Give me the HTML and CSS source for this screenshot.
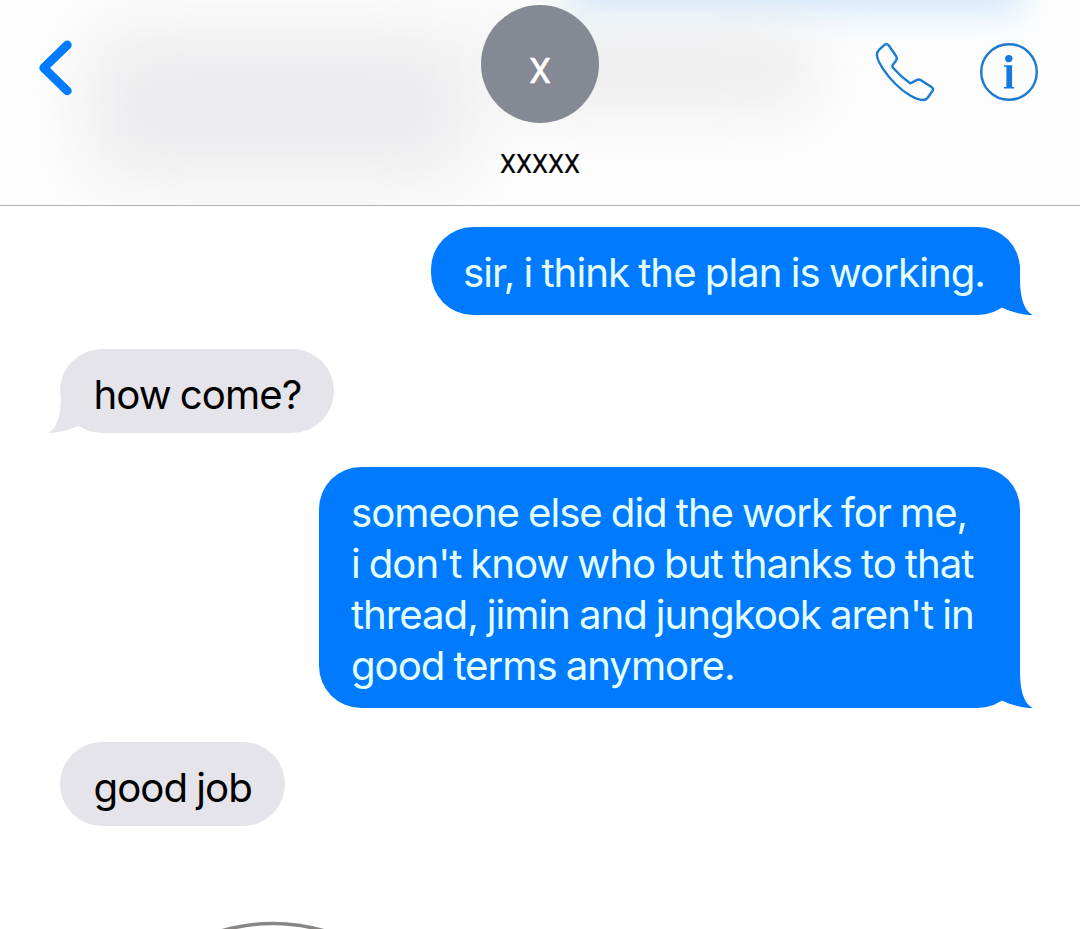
FILE: index.html
```
<!DOCTYPE html>
<html lang="en">
<head>
  <title>Messages</title>
  <meta charset="UTF-8">
  <meta name="viewport" content="width=device-width,initial-scale=1">
  <link rel="stylesheet" href="styles.css">
</head>

<body>
  <header class="topbar">
    <a href="#" class="back" aria-label="Back">
      <svg width="34" height="56" viewBox="0 0 34 56"><path d="M29.300 5 L5.700 27.800 L29.300 50.800"/></svg>
    </a>

    <div class="contact">
      <div class="avatar">X</div>
      <div class="name">XXXXX</div>
    </div>

    <div class="actions">
      <svg class="phone" width="60" height="60" viewBox="0 0 60 60">
        <path d="M9.500 2.800 Q12 1 14 3.800 L21 14 Q22.500 16.500 21 18.500 L17.600 23.300 Q17 24.500 17.800 25.500 Q25.500 34.500 34.500 40.800 Q35.500 41.500 36.500 40.900 L42 37.900 Q44 36.900 46 38.200 L56.500 45.100 Q59 46.800 57.300 49.300 L52.500 56 Q51 58 48 58 C41 58 30 51.500 20.500 42 C11 32.500 2.500 20 1.900 13 Q1.800 10 4 7.800 Z"/>
      </svg>
      <svg class="info" width="58" height="58" viewBox="0 0 58 58">
        <circle class="ring" cx="29" cy="29" r="27.800"/>
        <circle cx="28.800" cy="15.600" r="3.700"/>
        <path d="M24 22.200 H32.100 V44 H34.200 V45.400 H24 V44 H26.400 V23.800 H24 Z"/>
      </svg>
    </div>
  </header>

  <main class="chat">
    <div class="bubble me">sir, i think the plan is working.
      <svg class="tip" width="42" height="50" viewBox="0 0 42 50"><path d="M29 0 V12 C29 31 32 45 42 50 C32 50 20 47 11 42.500 L0 44 V0 Z"/></svg>
    </div>
    <div class="bubble them">how come?
      <svg class="tip" width="42" height="50" viewBox="0 0 42 50"><path d="M29 0 V12 C29 31 32 45 42 50 C32 50 20 47 11 42.500 L0 44 V0 Z"/></svg>
    </div>
    <div class="bubble me long">someone else did the work for me,<br>i don't know who but thanks to that<br>thread, jimin and jungkook aren't in<br>good terms anymore.
      <svg class="tip" width="42" height="50" viewBox="0 0 42 50"><path d="M29 0 V12 C29 31 32 45 42 50 C32 50 20 47 11 42.500 L0 44 V0 Z"/></svg>
    </div>
    <div class="bubble them">good job</div>
    <svg class="arc" width="110" height="16" viewBox="0 0 110 16"><path d="M3 18 Q55 3 107 18"/></svg>
  </main>
</body>
</html>
```
FILE: styles.css
```
*, *:before, *:after {
  box-sizing: border-box;
}

body {
  margin: 0;
  height: 929px;
  background: #fff;
  font-family: Inter, "Liberation Sans", sans-serif;
  overflow: hidden;
}

.topbar {
  position: relative;
  display: grid;
  grid-template-columns: 1fr 200px 1fr;
  height: 206px;
  border-bottom: 1px solid #b2b2b4;
  background: #fdfdfd;
  overflow: hidden;
}

.topbar:before, .topbar:after {
  content: "";
  position: absolute;
}
.topbar:before {
  left: 88px;
  top: 30px;
  width: 385px;
  height: 152px;
  border-radius: 40px;
  background: #ececee;
  filter: blur(32px);
}
.topbar:after {
  left: 570px;
  top: -50px;
  width: 450px;
  height: 60px;
  background: #cce4fb;
  filter: blur(18px);
}

.back {
  position: relative;
  z-index: 1;
  padding: 40px 0 0 38px;
}
.back path {
  fill: none;
  stroke: #007aff;
  stroke-width: 8.800;
  stroke-linecap: round;
  stroke-linejoin: round;
}

.contact {
  position: relative;
  z-index: 1;
  display: flex;
  flex-direction: column;
  align-items: center;
  padding-top: 5px;
  font-family: Roboto, "Liberation Sans", sans-serif;
}
/* second smudge, right of the avatar */
.contact:before {
  content: "";
  position: absolute;
  z-index: -1;
  left: 50px;
  top: 26px;
  width: 325px;
  height: 84px;
  border-radius: 38px;
  background: #ececed;
  filter: blur(30px);
}
.avatar {
  width: 118px;
  height: 118px;
  border-radius: 50%;
  background: #858994;
  color: #fff;
  font-size: 34.500px;
  line-height: 132px;
  text-align: center;
  -webkit-text-stroke: .5px #fff;
}
.name {
  margin-top: 25px;
  font-size: 25.500px;
  line-height: 32px;
  color: #000;
  -webkit-text-stroke: .2px #000;
}

.actions {
  position: relative;
  z-index: 1;
  display: flex;
  justify-content: flex-end;
  align-items: flex-start;
  gap: 45px;
  padding: 42px 42px 0 0;
}
.phone path, .info .ring {
  fill: none;
  stroke: #1c7bd0;
  stroke-width: 2.400;
  stroke-linejoin: round;
}
.info {
  margin-top: 1px;
  fill: #1478e4;
}

.chat {
  display: flex;
  flex-direction: column;
  align-items: flex-start;
  gap: 34px;
  padding: 21px 60px 0;
}

.bubble {
  position: relative;
  border-radius: 42px;
  font-size: 40.200px;
  line-height: 51px;
  letter-spacing: -.960px;
  word-spacing: -1.200px;
  white-space: nowrap;
}
.me {
  align-self: flex-end;
  padding: 20px 35px 17px 32px;
  background: #007aff;
  color: #e4ffff;
}
.them {
  padding: 20px 33px 13px 33.500px;
  background: #e5e4ea;
  color: #000;
}
.long {
  width: 701px;
  letter-spacing: -1.030px;
}

.tip {
  position: absolute;
  right: -13px;
  bottom: 0;
  fill: #007aff;
}
.them .tip {
  right: auto;
  left: -12px;
  fill: #e5e4ea;
  transform: scaleX(-1);
}

.arc {
  margin: 53px 0 0 158px;
  fill: none;
  stroke: #8a8585;
  stroke-width: 3.500;
  filter: blur(.7px);
}
```
